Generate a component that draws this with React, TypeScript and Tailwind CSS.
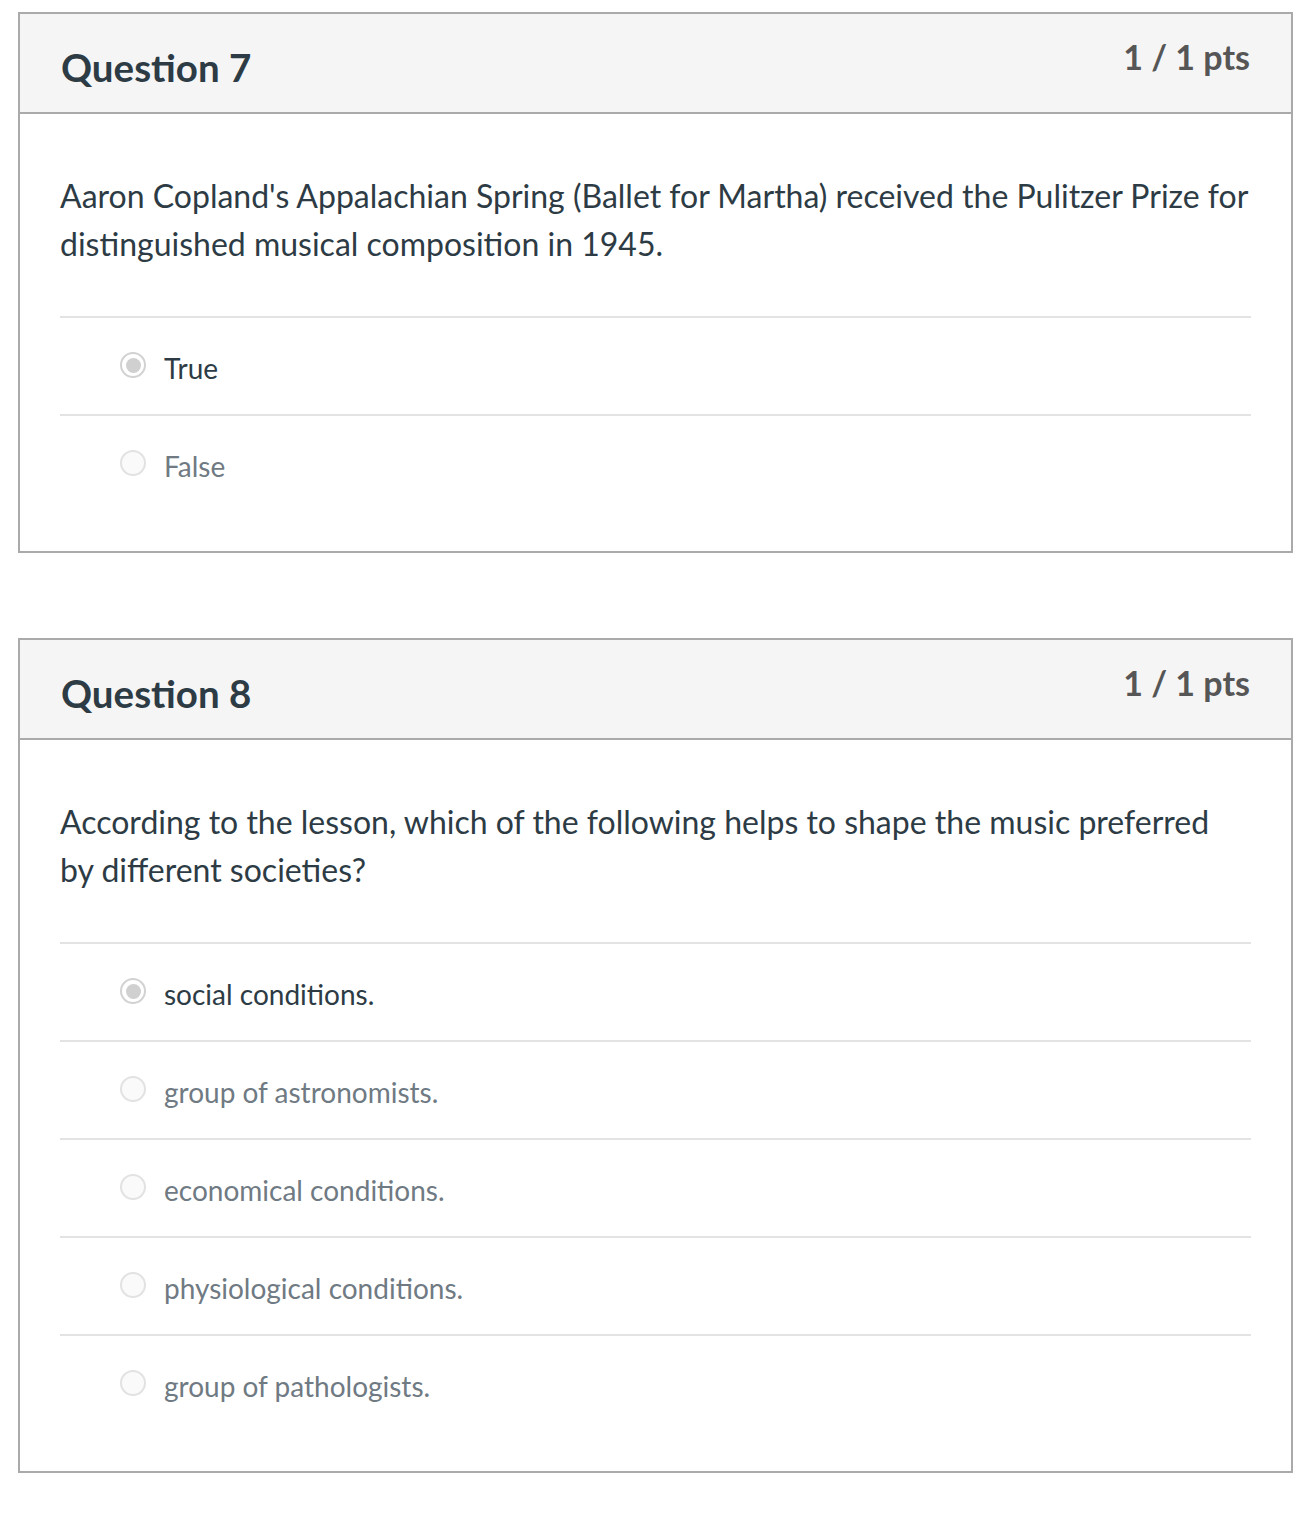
import React from "react";

interface Answer {
    text: string;
    selected?: boolean;
}

interface QuestionData {
    id: number;
    title: string;
    points: string;
    lines: string[];
    answers: Answer[];
}

const questions: QuestionData[] = [
    {
        id: 7,
        title: "Question 7",
        points: "1 / 1 pts",
        lines: [
            "Aaron Copland's Appalachian Spring (Ballet for Martha) received the Pulitzer Prize for",
            "distinguished musical composition in 1945.",
        ],
        answers: [{ text: "True", selected: true }, { text: "False" }],
    },
    {
        id: 8,
        title: "Question 8",
        points: "1 / 1 pts",
        lines: [
            "According to the lesson, which of the following helps to shape the music preferred",
            "by different societies?",
        ],
        answers: [
            { text: "social conditions.", selected: true },
            { text: "group of astronomists." },
            { text: "economical conditions." },
            { text: "physiological conditions." },
            { text: "group of pathologists." },
        ],
    },
];

const Radio: React.FC<{ checked?: boolean }> = ({ checked }) =>
    checked ? (
        <span className="-mt-[2px] flex h-[26px] w-[26px] shrink-0 items-center justify-center rounded-full border-2 border-[#d2d2d2] bg-white">
            <span className="h-[15px] w-[15px] rounded-full bg-[#d0d0d0]"></span>
        </span>
    ) : (
        <span className="-mt-[2px] h-[26px] w-[26px] shrink-0 rounded-full border-2 border-[#e2e2e2] bg-[#fafafa]"></span>
    );

const QuestionCard: React.FC<{ q: QuestionData }> = ({ q }) => (
    <div className="w-[1275px] border-2 border-[#aaaaaa] bg-white">
        {/* Header */}
        <div className="flex h-[100px] items-start justify-between border-b-2 border-[#aaaaaa] bg-[#f5f5f5] pl-[41px] pr-[41px]">
            <h2 className="pt-[30px] text-[38.5px] font-bold leading-[46px] text-[#2d3b45]">{q.title}</h2>
            <span className="pt-[23px] text-[34px] font-bold leading-[40px] text-[#565656]">{q.points}</span>
        </div>

        {/* Body */}
        <div className="px-[40px] pt-[58px] pb-[39px]">
            <p className="whitespace-nowrap text-[32px] leading-[48px] text-[#2d3b45]">
                {q.lines[0]}
                <br />
                {q.lines[1]}
            </p>

            <div className="mt-[48px]">
                {q.answers.map((a) => (
                    <div
                        key={a.text}
                        className="flex h-[98px] items-center gap-[18px] border-t-2 border-[#e3e3e3] pl-[60px]">
                        <Radio checked={a.selected} />
                        <span
                            className={
                                a.selected
                                    ? "mt-[3px] text-[28px] leading-[34px] text-[#2d3b45]"
                                    : "mt-[3px] text-[28px] leading-[34px] text-[#6f7a83]"
                            }>
                            {a.text}
                        </span>
                    </div>
                ))}
            </div>
        </div>
    </div>
);

const App: React.FC = () => {
    return (
        <div
            className="min-h-[1528px] bg-white pl-[18px] pt-[12px]"
            style={{ fontFamily: "Lato, 'Open Sans', Arial, sans-serif" }}>
            <div className="flex flex-col gap-[85px]">
                {questions.map((q) => (
                    <QuestionCard key={q.id} q={q} />
                ))}
            </div>
        </div>
    );
};

export default App;
